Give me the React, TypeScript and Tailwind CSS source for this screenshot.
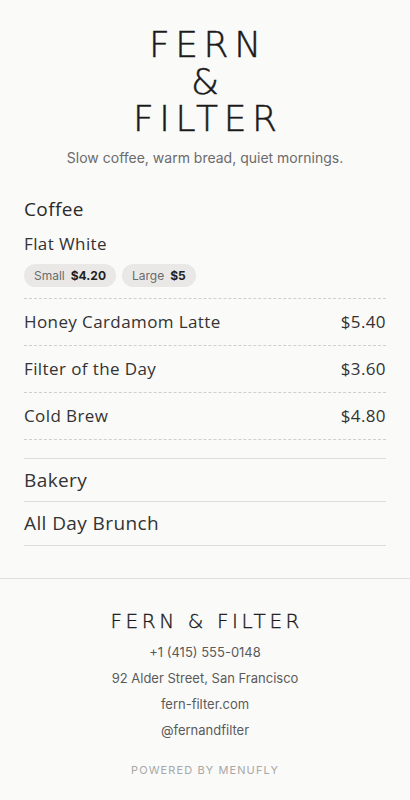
import React from 'react';

const display = { fontFamily: '"DejaVu Sans", "Open Sans", sans-serif' };
const item = { fontFamily: '"Open Sans", "DejaVu Sans", sans-serif' };
const body = { fontFamily: 'Inter, "Noto Sans", sans-serif' };

const coffeeItems = [
  { name: 'Honey Cardamom Latte', price: '$5.40' },
  { name: 'Filter of the Day', price: '$3.60' },
  { name: 'Cold Brew', price: '$4.80' },
];

export default function App() {
  return (
    <div className="min-h-screen bg-[#fafaf9] text-[#333333]" style={body}>
      {/* Header */}
      <header className="px-6 pt-[26px] text-center">
        <h1
          className="text-[36px] leading-[37px] font-extralight tracking-[0.155em] pl-[0.155em] text-[#1a1a1a] [-webkit-text-stroke:0.5px_#1a1a1a]"
          style={display}
        >
          FERN
          <br />&amp;
          <br />FILTER
        </h1>
        <p className="mt-[11px] text-[14px] leading-5 text-[#6b6b6b]">Slow coffee, warm bread, quiet mornings.</p>
      </header>

      {/* Menu */}
      <main className="px-6 pt-[29px] tracking-[0.025em]" style={item}>
        <section className="pb-[18px]">
          <h2 className="text-[19px] leading-6 text-[#2a2a2a]">Coffee</h2>
          <div className="pt-[11px] pb-[11px] border-b border-dashed border-[#cfcfcf]">
            <div className="text-[17px] leading-6">Flat White</div>
            <div className="mt-[8px] flex gap-[6px] tracking-normal" style={body}>
              <span className="rounded-full bg-[#e9e8e6] px-[10px] h-[23px] flex items-center gap-[6px] text-[12px]">
                <span className="text-[#6b6b6b]">Small</span>
                <span className="font-bold text-[#1f1f1f]">$4.20</span>
              </span>
              <span className="rounded-full bg-[#e9e8e6] px-[10px] h-[23px] flex items-center gap-[6px] text-[12px]">
                <span className="text-[#6b6b6b]">Large</span>
                <span className="font-bold text-[#1f1f1f]">$5</span>
              </span>
            </div>
          </div>
          {coffeeItems.map((it) => (
            <div
              key={it.name}
              className="flex justify-between items-center h-[47px] border-b border-dashed border-[#cfcfcf] text-[17px]"
            >
              <span>{it.name}</span>
              <span>{it.price}</span>
            </div>
          ))}
        </section>

        <div className="border-t border-[#dcdcdc]">
          <div className="h-[43px] flex items-center border-b border-[#dcdcdc] text-[19px]">Bakery</div>
          <div className="h-[44px] flex items-center border-b border-[#dcdcdc] text-[19px]">All Day Brunch</div>
        </div>
      </main>

      {/* Footer */}
      <footer className="mt-[32px] border-t border-[#e0e0e0] pt-[28px] pb-[24px] text-center">
        <div
          className="text-[20px] leading-7 font-extralight tracking-[0.18em] pl-[0.18em] text-[#1a1a1a] [-webkit-text-stroke:0.35px_#1a1a1a]"
          style={display}
        >
          FERN &amp; FILTER
        </div>
        <div className="mt-[7px] flex flex-col gap-[6px] text-[13px] leading-5 text-[#5a5a5a]">
          <span>+1 (415) 555-0148</span>
          <span>92 Alder Street, San Francisco</span>
          <span>fern-filter.com</span>
          <span>@fernandfilter</span>
        </div>
        <div className="mt-[22px] text-[11px] tracking-[0.1em] text-[#a8a8a8]">POWERED BY MENUFLY</div>
      </footer>
    </div>
  );
}
